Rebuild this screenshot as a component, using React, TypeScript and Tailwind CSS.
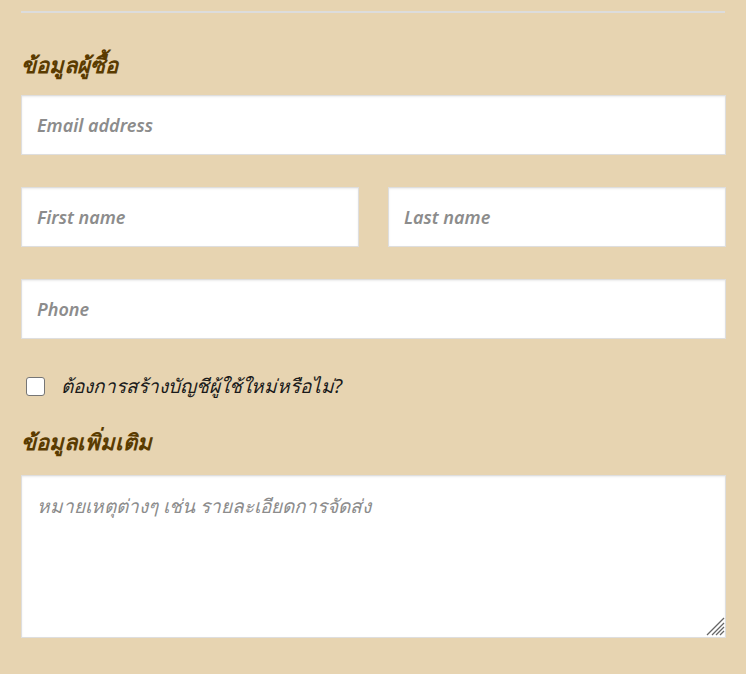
import React from "react";

const inputCls =
  "block w-full h-[60px] bg-white border border-[#dedede] shadow-[inset_0_1px_2px_rgba(0,0,0,0.08)] px-[15px] text-[18px] italic font-semibold text-[#333] placeholder:text-[#8c8c8c] outline-none";

export default function App() {
  return (
    <div
      className="w-[746px] h-[674px] bg-[#e7d4b1] pl-[21px] pr-[20px] overflow-hidden"
      style={{ fontFamily: '"Noto Sans", "Open Sans", sans-serif' }}
    >
      <div className="pt-[11px]">
        <div className="h-[2px] bg-[#dcdcdc] mr-[1px]" />
      </div>
      <h3 className="mt-[36px] h-[31px] leading-[31px] text-[22px] font-bold italic text-[#5a3b00]">
        ข้อมูลผู้ซื้อ
      </h3>
      <div className="mt-[15px]">
        <input className={inputCls} placeholder="Email address" />
      </div>
      <div className="mt-[32px] grid grid-cols-2 gap-x-[29px]">
        <input className={inputCls} placeholder="First name" />
        <input className={inputCls} placeholder="Last name" />
      </div>
      <div className="mt-[32px]">
        <input className={inputCls} placeholder="Phone" />
      </div>
      <label className="mt-[37px] flex items-center h-[20px] pl-[5px]">
        <span className="w-[19px] h-[19px] rounded-[3px] border border-[#767676] bg-white shrink-0" />
        <span className="ml-[16px] text-[19px] italic text-[#1a1a1a] leading-[20px]">
          ต้องการสร้างบัญชีผู้ใช้ใหม่หรือไม่?
        </span>
      </label>
      <h3 className="mt-[30px] h-[31px] leading-[31px] text-[22px] font-bold italic text-[#5a3b00]">
        ข้อมูลเพิ่มเติม
      </h3>
      <div className="mt-[18px] relative">
        <textarea
          className="block w-full h-[163px] resize-none bg-white border border-[#dedede] shadow-[inset_0_1px_2px_rgba(0,0,0,0.08)] px-[15px] pt-[16px] text-[19px] italic text-[#333] placeholder:text-[#8c8c8c] outline-none"
          placeholder="หมายเหตุต่างๆ เช่น รายละเอียดการจัดส่ง"
        />
        <svg
          className="absolute right-[1px] bottom-[2px]"
          width="19"
          height="19"
          viewBox="0 0 19 19"
        >
          <g stroke="#666" strokeWidth="1.3">
            <line x1="1" y1="18" x2="18" y2="1" />
            <line x1="6" y1="18" x2="18" y2="6" />
            <line x1="10" y1="18" x2="18" y2="10" />
            <line x1="14" y1="18" x2="18" y2="14" />
          </g>
        </svg>
      </div>
    </div>
  );
}
